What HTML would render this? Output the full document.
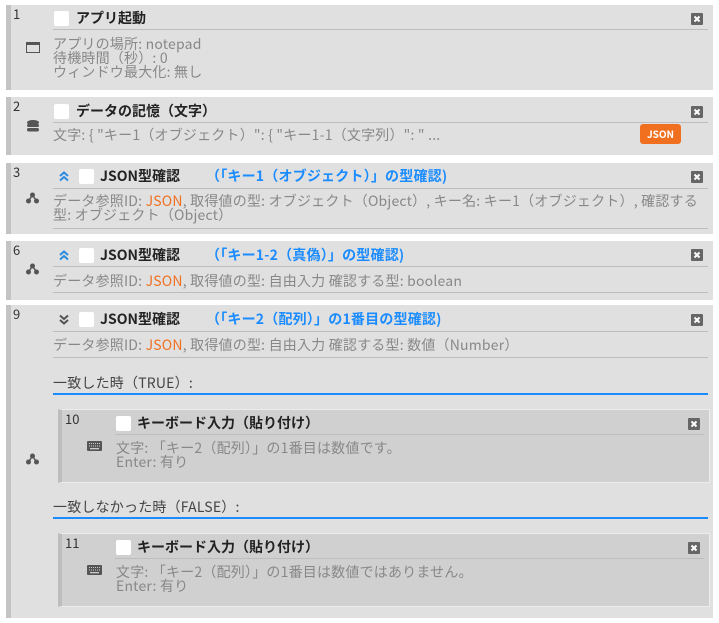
<!DOCTYPE html>
<html><head><meta charset="utf-8">
<style>
*{margin:0;padding:0;box-sizing:border-box}
body{width:719px;height:623px;background:#fff;position:relative;overflow:hidden;font-family:"Noto Sans CJK JP","Liberation Sans",sans-serif;color:#222}
.a{position:absolute;white-space:nowrap}
.blk{position:absolute;background:#e0e0e0;border-left:5px solid #c4c4c4}
.nb{position:absolute;background:#d0d0d0;border:1px solid #ececec;border-left:4px solid #bdbdbd}
.num{font-size:13px;color:#333;line-height:16px}
.cb{position:absolute;width:15px;height:15px;background:#fff;border-radius:2px}
.t{font-size:14px;font-weight:bold;color:#222;line-height:18px}
.hl{position:absolute;height:1px;background:#bdbdbd}
.d{font-size:14px;letter-spacing:0.2px;color:#888;line-height:14px}
.o{color:#f07020}
.b{color:#1a8cff;font-weight:bold;font-size:14px;letter-spacing:0.2px;line-height:18px}
.bl{position:absolute;height:2px;background:#1a8cff}
</style></head><body>
<svg width="0" height="0" style="position:absolute"><defs>
<g id="xx"><rect width="12" height="12" rx="1" fill="#666"/><path d="M3.5 3.5L8.5 8.5M8.5 3.5L3.5 8.5" stroke="#fff" stroke-width="2"/></g>
<g id="tree"><circle cx="6.5" cy="3" r="2.5" fill="#555"/><circle cx="2.5" cy="9" r="2.5" fill="#555"/><circle cx="10.5" cy="9" r="2.5" fill="#555"/><path d="M6.5 3L2.5 9M6.5 3L10.5 9" stroke="#555" stroke-width="1.5"/></g>
<g id="up"><path d="M1 5L5 1.5L9 5M1 9.5L5 6L9 9.5" fill="none" stroke="#2a8be0" stroke-width="2"/></g>
<g id="dn"><path d="M1 1.5L5 5L9 1.5M1 6L5 9.5L9 6" fill="none" stroke="#555" stroke-width="2"/></g>
<g id="kb"><rect x="0" y="0" width="15" height="10" rx="1" fill="#555"/><path d="M2 2.5h11M2 5h11" stroke="#ccc" stroke-width="1" stroke-dasharray="1 1"/><rect x="3" y="7" width="9" height="1.3" fill="#ccc"/></g>
</defs></svg>

<div class="blk" style="left:6px;top:5px;width:707px;height:85px"></div>
<div class="a num" style="left:13px;top:6px">1</div>
<div class="cb" style="left:54px;top:11px"></div>
<div class="a t" style="left:76px;top:9px">アプリ起動</div>
<div class="hl" style="left:53px;top:29px;width:655px"></div>
<svg class="a" style="left:691px;top:13px" width="12" height="12"><use href="#xx"/></svg>
<svg class="a" style="left:26px;top:42px" width="14" height="11"><rect x="0.5" y="0.5" width="13" height="10" fill="none" stroke="#555"/><rect x="0" y="0" width="14" height="3" fill="#555"/></svg>
<div class="a d" style="left:53px;top:37px">アプリの場所: notepad<br>待機時間（秒）: 0<br>ウィンドウ最大化: 無し</div>

<div class="blk" style="left:6px;top:97px;width:707px;height:58px"></div>
<div class="a num" style="left:13px;top:98px">2</div>
<div class="cb" style="left:54px;top:104px"></div>
<div class="a t" style="left:76px;top:102px">データの記憶（文字）</div>
<div class="hl" style="left:53px;top:122px;width:655px"></div>
<svg class="a" style="left:691px;top:106px" width="12" height="12"><use href="#xx"/></svg>
<svg class="a" style="left:27px;top:120px" width="12" height="12"><ellipse cx="6" cy="2.5" rx="6" ry="2.5" fill="#555"/><rect x="0" y="4" width="12" height="3" rx="1.5" fill="#555"/><rect x="0" y="8" width="12" height="3.5" rx="1.7" fill="#555"/></svg>
<div class="a d" style="left:53px;top:128px">文字: { "キー1（オブジェクト）": { "キー1-1（文字列）": " ...</div>
<div class="a" style="left:640px;top:124px;width:41px;height:20px;background:#f07020;border-radius:3px;color:#fff;font-size:10px;font-weight:bold;text-align:center;line-height:20px">JSON</div>

<div class="blk" style="left:6px;top:163px;width:707px;height:71px"></div>
<div class="a num" style="left:13px;top:164px">3</div>
<svg class="a" style="left:59px;top:171px" width="10" height="11"><use href="#up"/></svg>
<div class="cb" style="left:79px;top:169px"></div>
<div class="a t" style="left:100px;top:167px">JSON型確認</div>
<div class="a b" style="left:206px;top:167px">（「キー1（オブジェクト）」の型確認)</div>
<div class="hl" style="left:53px;top:188px;width:655px"></div>
<svg class="a" style="left:691px;top:171px" width="12" height="12"><use href="#xx"/></svg>
<svg class="a" style="left:26px;top:192px" width="13" height="12"><use href="#tree"/></svg>
<div class="a d" style="left:53px;top:194px">データ参照ID: <span class="o">JSON</span>, 取得値の型: オブジェクト（Object）, キー名: キー1（オブジェクト）, 確認する<br>型: オブジェクト（Object）</div>
<div class="hl" style="left:53px;top:228px;width:655px"></div>

<div class="blk" style="left:6px;top:241px;width:707px;height:59px"></div>
<div class="a num" style="left:13px;top:242px">6</div>
<svg class="a" style="left:59px;top:250px" width="10" height="11"><use href="#up"/></svg>
<div class="cb" style="left:79px;top:248px"></div>
<div class="a t" style="left:100px;top:246px">JSON型確認</div>
<div class="a b" style="left:206px;top:246px">（「キー1-2（真偽）」の型確認)</div>
<div class="hl" style="left:53px;top:266px;width:655px"></div>
<svg class="a" style="left:691px;top:249px" width="12" height="12"><use href="#xx"/></svg>
<svg class="a" style="left:26px;top:263px" width="13" height="12"><use href="#tree"/></svg>
<div class="a d" style="left:53px;top:274px">データ参照ID: <span class="o">JSON</span>, 取得値の型: 自由入力 確認する型: boolean</div>
<div class="hl" style="left:53px;top:292px;width:655px"></div>

<div class="blk" style="left:6px;top:305px;width:707px;height:313px"></div>
<div class="a num" style="left:13px;top:306px">9</div>
<svg class="a" style="left:59px;top:314px" width="10" height="11"><use href="#dn"/></svg>
<div class="cb" style="left:79px;top:312px"></div>
<div class="a t" style="left:100px;top:310px">JSON型確認</div>
<div class="a b" style="left:206px;top:310px">（「キー2（配列）」の1番目の型確認)</div>
<div class="hl" style="left:53px;top:331px;width:655px"></div>
<svg class="a" style="left:691px;top:314px" width="12" height="12"><use href="#xx"/></svg>
<div class="a d" style="left:53px;top:338px">データ参照ID: <span class="o">JSON</span>, 取得値の型: 自由入力 確認する型: 数値（Number）</div>
<div class="hl" style="left:53px;top:357px;width:655px"></div>
<div class="a d" style="left:53px;top:376px;color:#444">一致した時（TRUE）:</div>
<div class="bl" style="left:53px;top:393px;width:655px"></div>
<svg class="a" style="left:26px;top:453px" width="13" height="12"><use href="#tree"/></svg>

<div class="nb" style="left:58px;top:409px;width:652px;height:74px"></div>
<div class="a num" style="left:65px;top:411px">10</div>
<div class="cb" style="left:116px;top:416px"></div>
<div class="a t" style="left:137px;top:414px">キーボード入力（貼り付け）</div>
<div class="hl" style="left:115px;top:434px;width:589px"></div>
<svg class="a" style="left:688px;top:418px" width="12" height="12"><use href="#xx"/></svg>
<svg class="a" style="left:87px;top:441px" width="15" height="10"><use href="#kb"/></svg>
<div class="a d" style="left:116px;top:441px">文字: 「キー2（配列）」の1番目は数値です。<br>Enter: 有り</div>

<div class="a d" style="left:53px;top:500px;color:#444">一致しなかった時（FALSE）:</div>
<div class="bl" style="left:53px;top:517px;width:655px"></div>

<div class="nb" style="left:58px;top:533px;width:652px;height:74px"></div>
<div class="a num" style="left:65px;top:535px">11</div>
<div class="cb" style="left:116px;top:540px"></div>
<div class="a t" style="left:137px;top:538px">キーボード入力（貼り付け）</div>
<div class="hl" style="left:115px;top:558px;width:589px"></div>
<svg class="a" style="left:688px;top:542px" width="12" height="12"><use href="#xx"/></svg>
<svg class="a" style="left:87px;top:565px" width="15" height="10"><use href="#kb"/></svg>
<div class="a d" style="left:116px;top:565px">文字: 「キー2（配列）」の1番目は数値ではありません。<br>Enter: 有り</div>

</body></html>
